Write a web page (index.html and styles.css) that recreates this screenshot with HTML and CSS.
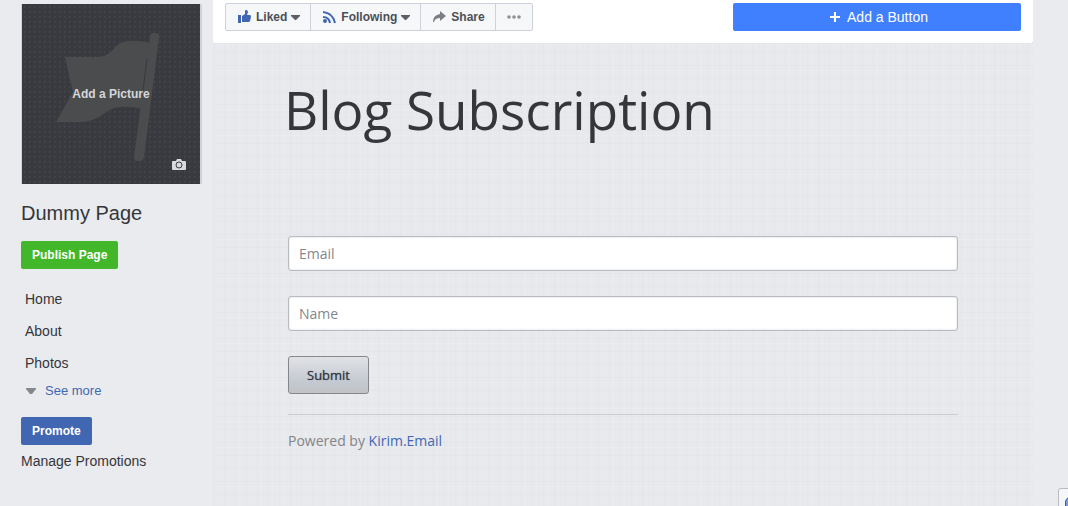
FILE: index.html
```html
<!DOCTYPE html>
<html lang="en">
<head>
<meta charset="UTF-8">
<meta name="viewport" content="width=device-width, initial-scale=1.0">
<title>Dummy Page</title>
<link rel="stylesheet" href="styles.css">
</head>
<body>

<div class="page">
  <aside class="sidebar">
    <button type="button" class="picture">
      <svg class="flag" viewBox="0 0 178 180" aria-hidden="true">
        <path d="M43 53H74C94 53 90 37 108 37C116 36 122 38 128 39L121 106C114 102 100 102 92 104C78 110 76 119 52 118H34L51 88Z"/>
        <path d="M131 29H134Q138 29 137 34L122 153Q121 157 117 157H115Q112 157 112 153L128 33Q128 29 131 29Z"/>
        <path class="flag-gap" d="M125 55L121 86"/>
      </svg>
      <span>Add a Picture</span>
      <svg class="camera" viewBox="0 0 14 12" aria-hidden="true">
        <path d="M1 2H4L5 0H9L10 2H13Q14 2 14 3V10Q14 11 13 11H1Q0 11 0 10V3Q0 2 1 2Z"/>
        <circle cx="7" cy="6" r="3"/>
      </svg>
    </button>
    <h1>Dummy Page</h1>
    <button type="button" class="btn btn-publish">Publish Page</button>
    <nav>
      <a href="#">Home</a>
      <a href="#">About</a>
      <a href="#">Photos</a>
      <a href="#" class="more">
        <svg width="10" height="6" viewBox="0 0 10 6" aria-hidden="true"><path d="M0 0H10V1L6 6H4L0 1Z"/></svg>
        See more
      </a>
    </nav>
    <button type="button" class="btn btn-promote">Promote</button>
    <a href="#" class="manage">Manage Promotions</a>
  </aside>

  <main>
    <div class="toolbar">
      <div class="actions">
        <button type="button">
          <svg class="blue" width="14" height="14" viewBox="0 0 14 14" aria-hidden="true"><path d="M0 5H3V13H0ZM4 6L7 4V1Q7 0 8 0Q10 0 10 2L9 5H12Q13 5 13 7L12 11Q12 12 10 12H4Z"/></svg>
          Liked
          <svg class="caret" width="9" height="5" viewBox="0 0 9 5" aria-hidden="true"><path d="M0 0H9V1L5 5H4L0 1Z"/></svg>
        </button>
        <button type="button">
          <svg class="rss" width="14" height="14" viewBox="0 0 14 14" aria-hidden="true"><path d="M0 2Q10 3 12 13M0 7Q6 7 7 13"/><circle cx="2" cy="11" r="2"/></svg>
          Following
          <svg class="caret" width="9" height="5" viewBox="0 0 9 5" aria-hidden="true"><path d="M0 0H9V1L5 5H4L0 1Z"/></svg>
        </button>
        <button type="button">
          <svg class="gray" width="14" height="12" viewBox="0 0 14 12" aria-hidden="true"><path d="M7 0L13 5L7 10V7Q2 7 1 11H0Q0 4 7 3Z"/></svg>
          Share
        </button>
        <button type="button" aria-label="More">
          <svg class="dots" width="14" height="4" viewBox="0 0 14 4" aria-hidden="true"><circle cx="2" cy="2" r="1.8"/><circle cx="7" cy="2" r="1.8"/><circle cx="12" cy="2" r="1.8"/></svg>
        </button>
      </div>
      <button type="button" class="add-button">
        <svg width="10" height="10" viewBox="0 0 10 10" aria-hidden="true"><path d="M4 0H6V4H10V6H6V10H4V6H0V4H4Z"/></svg>
        Add a Button
      </button>
    </div>

    <form class="subscribe">
      <h2>Blog Subscription</h2>
      <input type="email" placeholder="Email" aria-label="Email">
      <input type="text" placeholder="Name" aria-label="Name">
      <button type="submit">Submit</button>
      <p>Powered by <a href="#">Kirim.Email</a></p>
    </form>
  </main>
</div>

<button type="button" class="chat" aria-label="Chat"><span></span></button>

</body>
</html>
```
FILE: styles.css
```css
* {
  box-sizing: border-box;
}
body {
  margin: 0;
  background-color: #e9ebee;
  color: #35363b;
  font-family: "Liberation Sans", Arial, sans-serif;
  font-size: 14px;
}
a {
  color: inherit;
  text-decoration: none;
}
button {
  font-family: inherit;
  cursor: pointer;
}
.page {
  display: flex;
  min-height: 100vh;
}

/* left column */
.sidebar {
  width: 213px;
  flex-shrink: 0;
  padding: 4px 11px 0 21px;
}
.picture {
  display: grid;
  width: 181px;
  height: 180px;
  padding: 0;
  border: 1px solid #d0d2d8;
  border-width: 0 2px 0 1px;
  background: #393a3f radial-gradient(#43454a 1px, transparent 1px) 0 0 / 5px 5px;
  color: #d5d6da;
  font-size: 12px;
  font-weight: bold;
}
.picture > * {
  grid-area: 1 / 1;
  place-self: center;
}
.flag {
  width: 100%;
  height: 180px;
  fill: #4b4c4e;
}
.flag-gap {
  stroke: #393a3f;
}
.picture .camera {
  place-self: end;
  width: 14px;
  height: 12px;
  margin: 0 14px 13px 0;
  fill: #d8dadf;
}
.camera circle {
  stroke: #393a3f;
}
h1 {
  margin: 17px 0 16px;
  font-size: 20px;
  font-weight: normal;
  line-height: 24px;
}
.btn {
  display: block;
  height: 28px;
  padding: 0 11px;
  border: 0;
  border-radius: 2px;
  color: #fff;
  font-size: 12px;
  font-weight: bold;
}
.btn-publish {
  background-color: #42b72a;
}
.btn-promote {
  background-color: #4267b2;
}
nav {
  padding: 14px 4px;
}
nav a {
  display: block;
  line-height: 32px;
}
nav .more {
  display: flex;
  align-items: center;
  gap: 9px;
  padding-left: 1px;
  color: #4267b2;
  font-size: 13px;
  line-height: 24px;
}
.more svg {
  fill: #85888e;
}
.manage {
  display: block;
  line-height: 32px;
}

/* right column */
main {
  flex: 1;
  margin-right: 35px;
  background:
    repeating-linear-gradient(90deg, rgba(200, 205, 215, 0.1) 0 1px, transparent 1px 4px, rgba(255, 255, 255, 0.1) 4px 5px, transparent 5px 11px),
    repeating-linear-gradient(rgba(200, 205, 215, 0.1) 0 1px, transparent 1px 5px, rgba(255, 255, 255, 0.1) 5px 6px, transparent 6px 13px),
    #e8e9ed;
}
.toolbar {
  display: flex;
  justify-content: space-between;
  padding: 3px 12px 12px;
  background-color: #fff;
  border-bottom: 1px dotted #ced0d8;
  border-radius: 0 0 3px 3px;
}
.actions {
  display: flex;
  height: 28px;
  border: 1px solid #ced0da;
  border-radius: 2px;
  background-color: #f6f7f9;
}
.actions button {
  display: flex;
  align-items: center;
  gap: 4px;
  padding: 0 10px 0 12px;
  border: 0;
  border-right: 1px solid #ced0da;
  background: none;
  color: #4b4f56;
  font-size: 12px;
  font-weight: bold;
}
.actions button:last-child {
  padding: 0 11px;
  border-right: 0;
}
.caret {
  fill: #5b5f66;
}
.blue {
  fill: #4267b2;
}
.rss {
  fill: #4267b2;
}
.rss path {
  fill: none;
  stroke: #4267b2;
  stroke-width: 2;
}
.gray {
  fill: #7b7e84;
}
.dots {
  fill: #8d9097;
}
.add-button {
  display: flex;
  align-items: center;
  justify-content: center;
  gap: 7px;
  width: 288px;
  height: 28px;
  padding: 0 6px 0 10px;
  border: 0;
  border-radius: 2px;
  background-color: #4080ff;
  color: #fff;
  font-size: 14px;
}
.add-button svg {
  fill: #fff;
}

/* subscription form */
.subscribe {
  padding: 28px 75px 0;
  font-family: "Open Sans", sans-serif;
}
h2 {
  margin: 0 0 88px -4px;
  font-size: 53px;
  font-weight: normal;
  line-height: 76px;
}
.subscribe input {
  display: block;
  width: 100%;
  height: 35px;
  margin-bottom: 25px;
  padding: 0 10px;
  border: 1px solid #b9bbc0;
  border-radius: 3px;
  background-color: #fff;
  box-shadow: inset 0 0 2px #c8ccd2;
  font-family: inherit;
  font-size: 14px;
}
.subscribe input::placeholder {
  color: #85878b;
}
.subscribe button {
  height: 38px;
  padding: 0 18px;
  border: 1px solid #85878c;
  border-radius: 3px;
  background: linear-gradient(#e0e2e6, #c4c8d0 70%, #c2c3c6);
  color: #35363b;
  font-size: 13px;
  font-weight: 500;
  text-shadow: 0 0 1px #5a6178;
}
.subscribe p {
  margin: 20px 0 0;
  padding-top: 14px;
  border-top: 1px solid #cccdd1;
  color: #828488;
  line-height: 24px;
}
.subscribe p a {
  color: #4267b2;
}

/* chat tab, cut off by the window corner */
.chat {
  position: fixed;
  right: -30px;
  bottom: -12px;
  width: 40px;
  height: 30px;
  padding: 8px 6px;
  border: 1px solid #b8bac0;
  border-radius: 3px;
  background-color: #f5f6f8;
}
.chat span {
  display: block;
  width: 16px;
  height: 16px;
  border: 1px solid #3c5ea8;
  border-radius: 5px;
  background-color: #7b9be0;
}
```
